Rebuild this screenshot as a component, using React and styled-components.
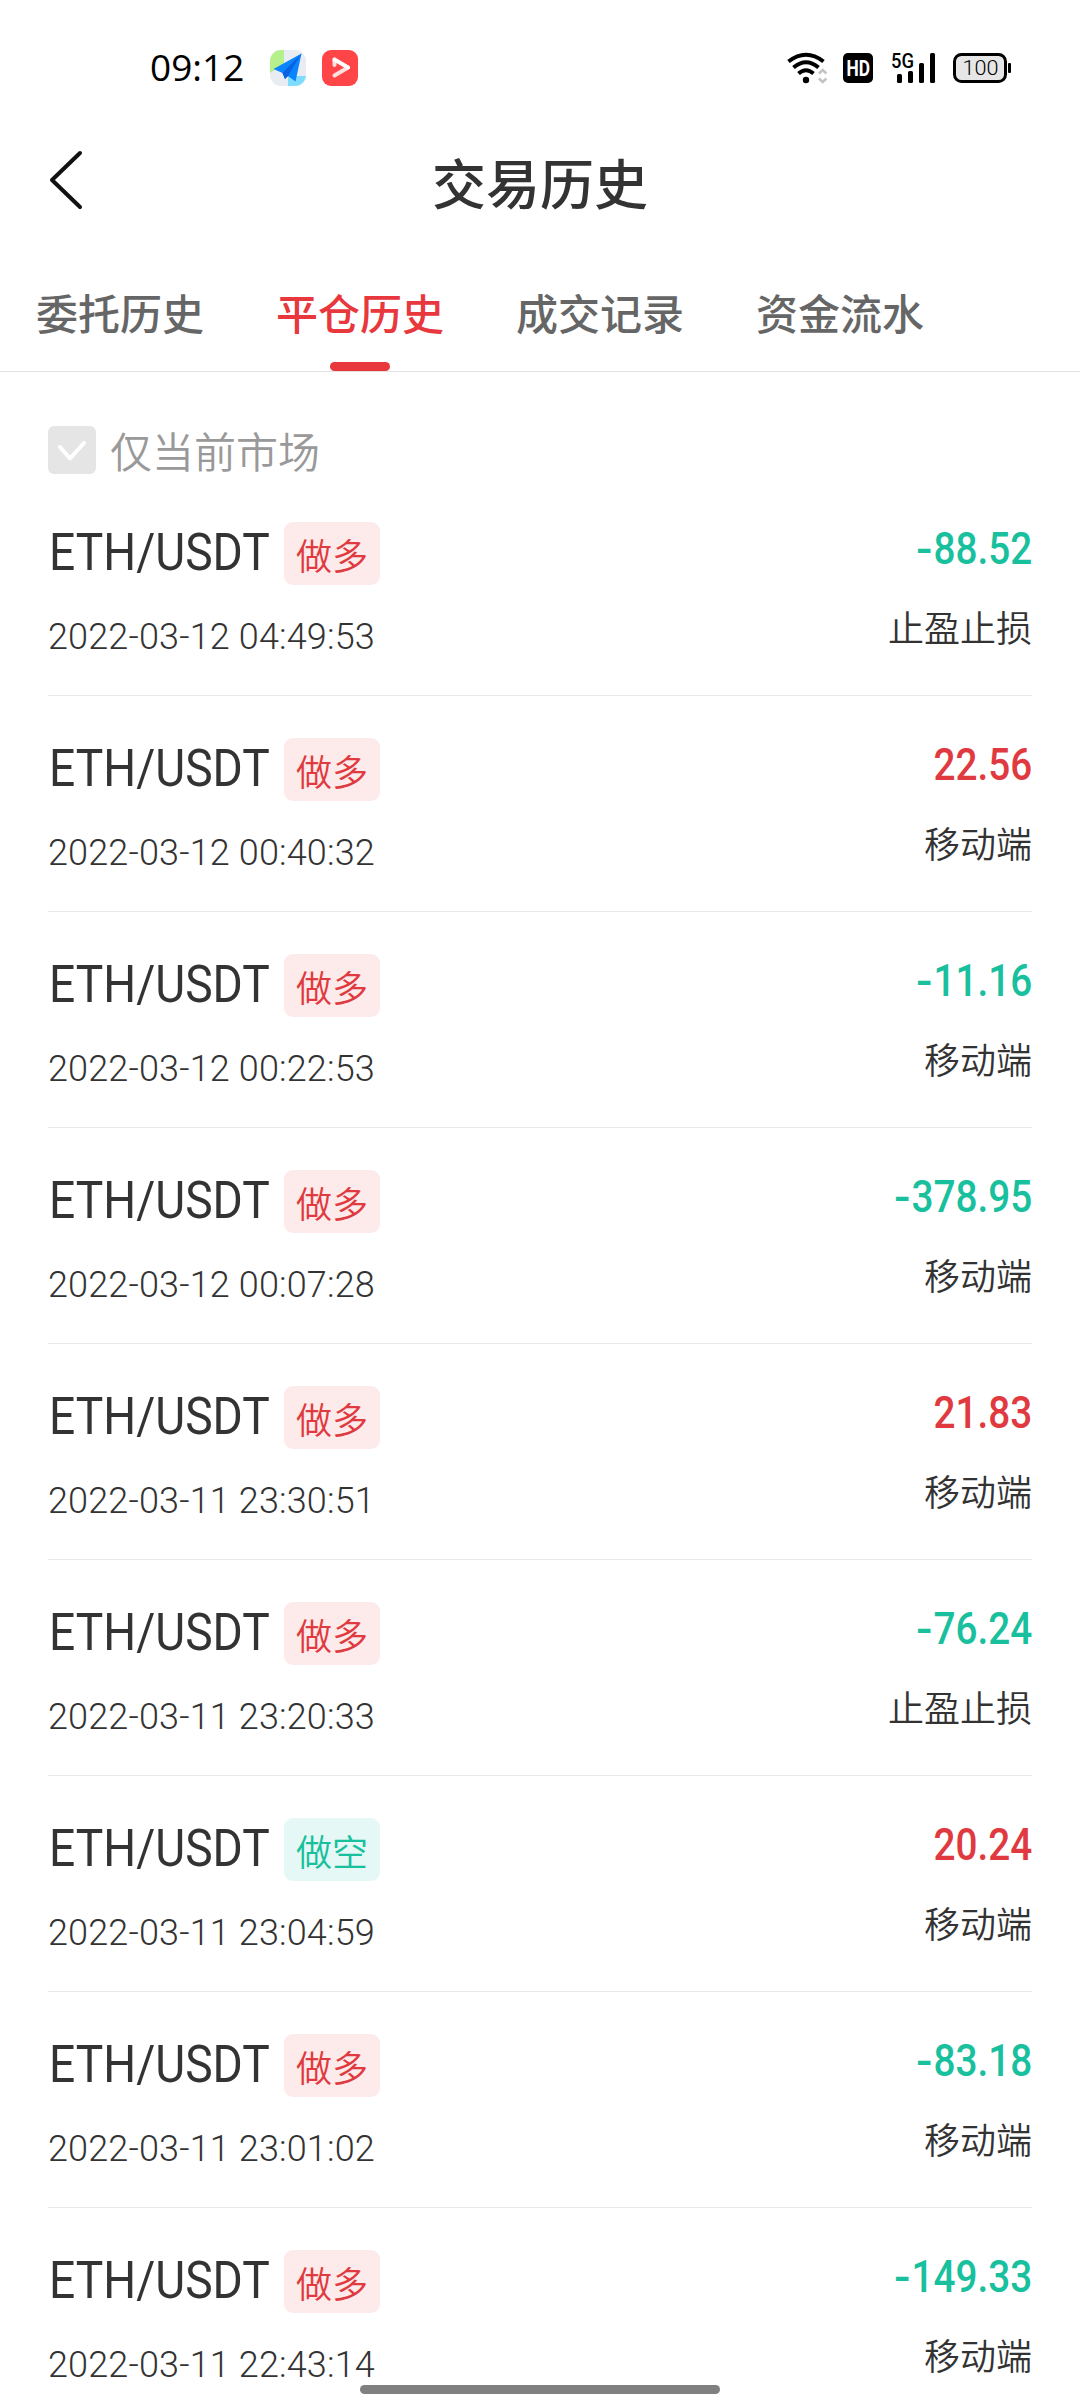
import React from 'react';
import styled, { createGlobalStyle } from 'styled-components';

const GlobalStyle = createGlobalStyle`
    * {
        box-sizing: border-box;
    }
    body {
        margin: 0;
        background: #fff;
        font-family: "Noto Sans CJK SC", sans-serif;
        color: #333;
    }
    svg {
        flex: none;
        overflow: visible;
    }
`;

const Screen = styled.div`
    position: relative;
    width: 1080px;
    height: 2400px;
    overflow: hidden;
    background: #fff;
`;

const StatusBar = styled.div`
    display: flex;
    align-items: center;
    justify-content: space-between;
    height: 136px;
    padding: 0 68px 0 149px;
`;

const StatusGroup = styled.div`
    display: flex;
    align-items: center;
    gap: ${props => props.$gap}px;
`;

const Clock = styled.span`
    width: 105px;
    padding: 0 0 2px 1px;
    font: 400 37px/44px "Open Sans", sans-serif;
    color: #000;
`;

const Header = styled.header`
    display: grid;
    grid-template-columns: 132px 1fr 132px;
    align-items: center;
    height: 94px;
`;

const BackButton = styled.button`
    display: flex;
    justify-content: center;
    padding: 0 0 7px;
    border: 0;
    background: none;
`;

const Title = styled.h1`
    margin: 0;
    padding-bottom: 3px;
    font-size: 54px;
    line-height: 80px;
    font-weight: 500;
    text-align: center;
`;

const Tabs = styled.nav`
    display: flex;
    gap: 72px;
    height: 142px;
    padding: 46px 36px 0;
    border-bottom: 1px solid #e2e2e2;
`;

const Tab = styled.div`
    display: flex;
    flex-direction: column;
    align-items: center;
    justify-content: space-between;
    font-size: 42px;
    line-height: 72px;
    font-weight: 500;
    color: ${props => (props.$active ? '#e8373d' : '#666')};

    &::after {
        content: '';
        width: 60px;
        height: 9px;
        border-radius: 4.5px;
        background: ${props => (props.$active ? '#e8373d' : 'none')};
    }
`;

const Filter = styled.label`
    display: flex;
    align-items: center;
    gap: 14px;
    height: 108px;
    padding: 48px 48px 0;
    font-size: 42px;
    font-weight: 350;
    line-height: 62px;
    color: #999;
`;

const CheckBox = styled.span`
    display: flex;
    flex: none;
    width: 48px;
    height: 48px;
    border-radius: 6px;
    background: #e5e5e5;
`;

const List = styled.div`
    padding: 0 48px;
`;

const Row = styled.div`
    display: flex;
    justify-content: space-between;
    height: 216px;
    padding-top: 42px;
    border-bottom: 1px solid #e9e9e9;
`;

const Info = styled.div`
    display: flex;
    flex-direction: column;
    align-items: flex-start;
`;

const PairLine = styled.div`
    display: flex;
    align-items: center;
    height: 63px;
`;

// the pair name is set narrower than Roboto's own widths
const Pair = styled.span`
    width: 235px;
    margin-left: 1px;
    padding-bottom: 2px;
    font: 450 52px/60px Roboto, sans-serif;
    white-space: nowrap;
    transform: scaleX(0.888);
    transform-origin: left;
`;

const Badge = styled.span`
    width: 96px;
    height: 63px;
    border-radius: 9px;
    font-size: 36px;
    font-weight: 350;
    line-height: 65px;
    text-align: center;
    color: ${props => (props.$short ? '#18c09d' : '#e03a40')};
    background: ${props => (props.$short ? '#e6f8f5' : '#fdeaea')};
`;

const Time = styled.span`
    margin-top: 30px;
    font: 350 36px/44px Roboto, sans-serif;
    letter-spacing: 0.15px;
    white-space: nowrap;
`;

const Result = styled.div`
    display: flex;
    flex-direction: column;
    align-items: flex-end;
`;

const Amount = styled.span`
    padding-top: 1px;
    font: 500 44px/52px Roboto, sans-serif;
    color: ${props => (props.$loss ? '#18c09d' : '#e03a40')};
    transform: scaleX(0.88);
    transform-origin: right;
`;

const Minus = styled.span`
    display: inline-block;
    margin-right: 1px;
    transform: scaleX(1.25);
    transform-origin: right;
`;

const Source = styled.span`
    margin-top: 24px;
    font-size: 36px;
    font-weight: 350;
    line-height: 54px;
`;

const HomeIndicator = styled.div`
    position: absolute;
    left: 360px;
    bottom: 6px;
    width: 360px;
    height: 9px;
    border-radius: 4.5px;
    background: #808080;
`;

const MapIcon = () => (
    <svg width="36" height="36" viewBox="0 0 36 36">
        <clipPath id="mapClip">
            <rect width="36" height="36" rx="11" />
        </clipPath>
        <g clipPath="url(#mapClip)">
            <rect width="36" height="36" fill="#e9edf3" />
            <path d="M0 0h14v14L0 23z" fill="#b5f08d" />
            <path d="M18 26h18v10H18z" fill="#7fdcff" />
        </g>
        <path d="M31.500 3.500L3.500 19l9 4 2.500 6 3-3 7.500 5.500z" fill="#0a84ff" />
        <path d="M31.500 3.500L12.500 23l2.500 6 3-3z" fill="#0a62e0" />
    </svg>
);

const VideoIcon = () => (
    <svg width="36" height="36" viewBox="0 0 36 36">
        <rect width="36" height="36" rx="9" fill="#ff4547" />
        <g fill="none" strokeWidth="4" strokeLinecap="round" strokeLinejoin="round">
            <path d="M12.500 15V9.500M12.500 25.500L26 17.500" stroke="#ffdede" />
            <path d="M12.500 9.500L26 17.500" stroke="#fff" />
        </g>
    </svg>
);

const WifiIcon = () => (
    <svg width="39" height="32" viewBox="0 0 39 32">
        <g fill="none" stroke="#000" strokeWidth="4">
            <path d="M1.500 9.500Q19 -4 36.500 9.500" />
            <path d="M6.500 15.500Q19 5 31.500 15.500" />
            <path d="M11.500 21.500Q19 15 26.500 21.500" />
        </g>
        <circle cx="19" cy="28" r="3.200" />
        <path d="M32 21.500l3.700-3.500 3.700 3.500M32 26.500l3.700 3.500 3.700-3.500" fill="none" stroke="#c4c4c4" strokeWidth="2.600" />
    </svg>
);

const HdIcon = () => (
    <svg width="32" height="30" viewBox="0 0 32 30">
        <rect width="30" height="30" rx="5" />
        <text x="3.500" y="23" textLength="23.500" lengthAdjust="spacingAndGlyphs" fontFamily="Roboto" fontWeight="700" fontSize="22.500" fill="#fff">HD</text>
    </svg>
);

const SignalIcon = () => (
    <svg width="44" height="30" viewBox="0 0 44 30">
        <text x="-1" y="14.500" textLength="23" lengthAdjust="spacingAndGlyphs" fontFamily="Roboto" fontWeight="500" fontSize="20">5G</text>
        <rect x="5" y="21" width="5" height="9" rx="1.500" />
        <rect x="16" y="18" width="5" height="12" rx="1.500" />
        <rect x="27" y="10" width="5" height="20" rx="1.500" />
        <rect x="38" y="0" width="5" height="30" rx="1.500" />
    </svg>
);

const BatteryIcon = () => (
    <svg width="59" height="30" viewBox="0 0 59 30">
        <rect x="1.500" y="1.500" width="51" height="27" rx="7" fill="#e6e6e6" stroke="#000" strokeWidth="3" />
        <rect x="55" y="10" width="3" height="10" rx="1" />
        <text x="27.500" y="22" textAnchor="middle" textLength="36" lengthAdjust="spacingAndGlyphs" fontFamily="Roboto" fontWeight="300" fontSize="21">100</text>
    </svg>
);

const tabs = ['委托历史', '平仓历史', '成交记录', '资金流水'];

const trades = [
    { side: '做多', time: '2022-03-12 04:49:53', amount: '-88.52', source: '止盈止损' },
    { side: '做多', time: '2022-03-12 00:40:32', amount: '22.56', source: '移动端' },
    { side: '做多', time: '2022-03-12 00:22:53', amount: '-11.16', source: '移动端' },
    { side: '做多', time: '2022-03-12 00:07:28', amount: '-378.95', source: '移动端' },
    { side: '做多', time: '2022-03-11 23:30:51', amount: '21.83', source: '移动端' },
    { side: '做多', time: '2022-03-11 23:20:33', amount: '-76.24', source: '止盈止损' },
    { side: '做空', time: '2022-03-11 23:04:59', amount: '20.24', source: '移动端' },
    { side: '做多', time: '2022-03-11 23:01:02', amount: '-83.18', source: '移动端' },
    { side: '做多', time: '2022-03-11 22:43:14', amount: '-149.33', source: '移动端' },
];

const TradeRow = ({ side, time, amount, source }) => {
    const loss = amount.startsWith('-');

    return (
        <Row>
            <Info>
                <PairLine>
                    <Pair>ETH/USDT</Pair>
                    <Badge $short={side === '做空'}>{side}</Badge>
                </PairLine>
                <Time>{time}</Time>
            </Info>
            <Result>
                <Amount $loss={loss}>
                    {loss && <Minus>-</Minus>}
                    {amount.replace('-', '')}
                </Amount>
                <Source>{source}</Source>
            </Result>
        </Row>
    );
};

const App = () => (
    <>
        <GlobalStyle />
        <Screen>
            <StatusBar>
                <StatusGroup $gap={16}>
                    <Clock>09:12</Clock>
                    <MapIcon />
                    <VideoIcon />
                </StatusGroup>
                <StatusGroup $gap={17}>
                    <WifiIcon />
                    <HdIcon />
                    <SignalIcon />
                    <BatteryIcon />
                </StatusGroup>
            </StatusBar>
            <Header>
                <BackButton>
                    <svg width="34" height="60" viewBox="0 0 34 60" fill="none" stroke="#111" strokeWidth="4" strokeLinecap="round" strokeLinejoin="round">
                        <path d="M31 3L3 30l28 27" />
                    </svg>
                </BackButton>
                <Title>交易历史</Title>
            </Header>
            <Tabs>
                {tabs.map((name, i) => (
                    <Tab key={name} $active={i === 1}>{name}</Tab>
                ))}
            </Tabs>
            <Filter>
                <CheckBox>
                    <svg width="48" height="48" viewBox="0 0 48 48" fill="none" stroke="#fff" strokeWidth="4" strokeLinecap="round" strokeLinejoin="round">
                        <path d="M12 21l10 11.500L36 17" />
                    </svg>
                </CheckBox>
                仅当前市场
            </Filter>
            <List>
                {trades.map(trade => (
                    <TradeRow key={trade.time} {...trade} />
                ))}
            </List>
            <HomeIndicator />
        </Screen>
    </>
);

export default App;
